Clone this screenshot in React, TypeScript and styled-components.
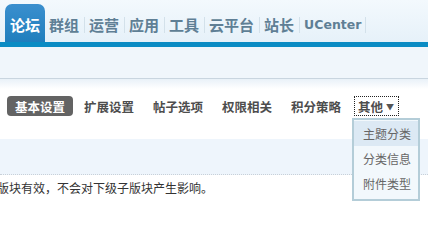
import styled, { createGlobalStyle } from 'styled-components'

const GlobalStyle = createGlobalStyle`
  html, body {
    margin: 0;
    padding: 0;
    background: #ffffff;
    font-family: "Noto Sans CJK SC", "Noto Sans", sans-serif;
    overflow: hidden;
  }
`

const Page = styled.div`
  width: 428px;
  height: 206px;
  position: relative;
  overflow: hidden;
`

const Header = styled.div`
  height: 42px;
  display: flex;
  align-items: flex-end;
  padding-left: 5px;
  background: linear-gradient(to bottom, #f3f9fd, #e6f1f9);
  border-bottom: 5px solid #0b8cc4;
`

const TopTab = styled.div<{ $active?: boolean }>`
  height: 38px;
  display: flex;
  align-items: center;
  padding: 3px 0 0;
  box-sizing: border-box;
  font-size: 15px;
  font-weight: 700;
  color: ${p => (p.$active ? '#ffffff' : '#5f7f95')};
  background: ${p => (p.$active ? 'linear-gradient(to bottom, #3a8fce, #1f7ebd)' : 'transparent')};
  border-radius: ${p => (p.$active ? '7px 7px 0 0' : '0')};
  .label {
    padding: ${p => (p.$active ? '0 5px' : '0 5px 0 4px')};
    line-height: 16px;
    border-right: ${p => (p.$active ? 'none' : '1px solid #d3e1ea')};
  }
  .latin {
    font-family: "DejaVu Sans", Verdana, sans-serif;
    font-size: 12.5px;
    padding-right: 4px;
  }
`

const SubHeader = styled.div`
  height: 31px;
  background: #f0f6fb;
  border-bottom: 1px solid #c9d5df;
`

const Fade = styled.div`
  height: 10px;
  background: linear-gradient(to bottom, #e9f1f8, #ffffff);
`

const NavRow = styled.div`
  margin-top: 7px;
  padding-left: 7px;
  height: 20px;
  display: flex;
  align-items: center;
  position: relative;
`

const NavItem = styled.div<{ $active?: boolean }>`
  height: 20px;
  display: flex;
  align-items: center;
  padding: 0 8px;
  margin-right: 3px;
  font-size: 12.5px;
  font-weight: 700;
  color: ${p => (p.$active ? '#ffffff' : '#4d4d4d')};
  background: ${p => (p.$active ? '#636363' : 'transparent')};
  border-radius: 4px;
`

const MoreItem = styled.div`
  position: relative;
  height: 20px;
  box-sizing: border-box;
  margin-left: 2px;
  display: flex;
  align-items: center;
  padding: 0 4px 0 3px;
  font-size: 12.5px;
  font-weight: 700;
  color: #4d4d4d;
  border: 1px dotted #222222;
  .arrow {
    font-size: 8px;
    margin-left: 3px;
    color: #555555;
  }
`

const Dropdown = styled.div`
  position: absolute;
  top: 21px;
  left: -3px;
  width: 68px;
  box-sizing: border-box;
  padding: 1px 0 3px;
  background: #f2f8fc;
  border: 2px solid #b4cdd8;
  z-index: 2;
`

const DropItem = styled.div<{ $hover?: boolean }>`
  height: 25px;
  line-height: 25px;
  padding-left: 9px;
  font-size: 12px;
  font-weight: 400;
  color: #666666;
  background: ${p => (p.$hover ? '#dce9f4' : 'transparent')};
`

const Band = styled.div`
  margin-top: 23px;
  height: 35px;
  background: #eef5fc;
  border-bottom: 1px dotted #c8d0d8;
`

const Note = styled.div`
  margin: 6px 0 0 -3px;
  font-size: 12px;
  line-height: 14px;
  color: #333333;
  white-space: nowrap;
`

const topTabs = ['群组', '运营', '应用', '工具', '云平台', '站长']
const navTabs = ['扩展设置', '帖子选项', '权限相关', '积分策略']
const moreItems = ['主题分类', '分类信息', '附件类型']

export default function App() {
  return (
    <Page>
      <GlobalStyle />
      <Header>
        <TopTab $active>
          <span className="label">论坛</span>
        </TopTab>
        {topTabs.map(t => (
          <TopTab key={t}>
            <span className="label">{t}</span>
          </TopTab>
        ))}
        <TopTab>
          <span className="label latin">UCenter</span>
        </TopTab>
      </Header>
      <SubHeader />
      <Fade />
      <NavRow>
        <NavItem $active>基本设置</NavItem>
        {navTabs.map(t => (
          <NavItem key={t}>{t}</NavItem>
        ))}
        <MoreItem>
          其他<span className="arrow">▼</span>
          <Dropdown>
            {moreItems.map((m, i) => (
              <DropItem key={m} $hover={i === 0}>
                {m}
              </DropItem>
            ))}
          </Dropdown>
        </MoreItem>
      </NavRow>
      <Band />
      <Note>版块有效，不会对下级子版块产生影响。</Note>
    </Page>
  )
}
